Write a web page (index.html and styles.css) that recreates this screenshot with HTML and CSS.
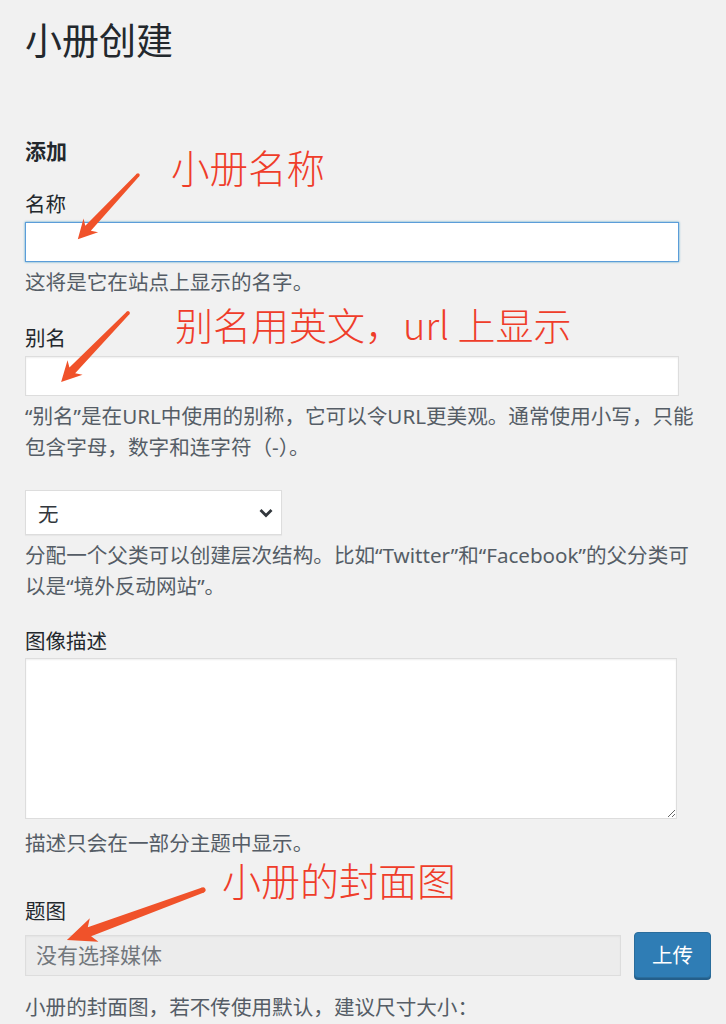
FILE: index.html
```html
<!DOCTYPE html>
<html lang="zh-CN">
<head>
<meta charset="utf-8">
<title>小册创建</title>
<link rel="stylesheet" href="styles.css">
</head>
<body>
<div class="page">
  <h1 class="title">小册创建</h1>
  <h2 class="subtitle">添加</h2>

  <div class="field field-first">
    <label class="label">名称</label>
    <input class="text-input is-focus" type="text">
    <p class="desc">这将是它在站点上显示的名字。</p>
  </div>

  <div class="field">
    <label class="label">别名</label>
    <input class="text-input" type="text">
    <p class="desc">“别名”是在URL中使用的别称，它可以令URL更美观。通常使用小写，只能包含字母，数字和连字符（-）。</p>
  </div>

  <div class="field field-select">
    <div class="select">
      <span>无</span>
      <svg class="chevron" width="14" height="10" viewBox="0 0 14 10"><path d="M1.5 2 L7 7.5 L12.5 2" fill="none" stroke="#32373c" stroke-width="2.8"/></svg>
    </div>
    <p class="desc">分配一个父类可以创建层次结构。比如“Twitter”和“Facebook”的父分类可以是“境外反动网站”。</p>
  </div>

  <div class="field field-desc">
    <label class="label">图像描述</label>
    <textarea class="textarea"></textarea>
    <p class="desc desc-after-area">描述只会在一部分主题中显示。</p>
  </div>

  <div class="field field-media">
    <label class="label">题图</label>
    <div class="media-row">
      <input class="media-input" type="text" placeholder="没有选择媒体" readonly>
      <button class="upload-btn" type="button">上传</button>
    </div>
    <p class="desc desc-media">小册的封面图，若不传使用默认，建议尺寸大小：</p>
  </div>

  <div class="notes">
    <span class="note note-1">小册名称</span>
    <span class="note note-2">别名用英文，url 上显示</span>
    <span class="note note-3">小册的封面图</span>
    <svg class="arrows" width="726" height="1024" viewBox="0 0 726 1024">
      <g fill="#f0522a">
        <g transform="translate(138,175) rotate(133.15)">
          <polygon points="0,-1.7 73,-3.8 69,-10 88,0 69,10 73,3.8 0,1.7"/>
          <circle cx="0" cy="0" r="1.7"/>
        </g>
        <g transform="translate(128,313) rotate(134.15)">
          <polygon points="0,-1.9 80,-4 76,-10.5 96,0 76,10.5 80,4 0,1.9"/>
          <circle cx="0" cy="0" r="1.9"/>
        </g>
        <g transform="translate(203,890) rotate(159.8)">
          <polygon points="0,-2.6 121,-4.8 116,-12.5 145,0 116,12.5 121,4.8 0,2.6"/>
          <circle cx="0" cy="0" r="2.6"/>
        </g>
      </g>
    </svg>
  </div>
</div>
</body>
</html>
```
FILE: styles.css
```css
* { box-sizing: border-box; }

body {
  margin: 0;
  background: #f1f1f1;
  font-family: "Noto Sans", "Noto Sans CJK SC", sans-serif;
  color: #23282d;
  overflow: hidden;
}

.page {
  position: relative;
  width: 726px;
  height: 1024px;
  padding: 18px 0 0 25px;
}

.title {
  margin: 0;
  font-size: 37px;
  font-weight: 400;
  line-height: 46px;
}

.subtitle {
  margin: 72px 0 0;
  font-size: 21px;
  font-weight: 700;
  line-height: 30px;
}

.field { margin-top: 26px; }
.field-first { margin-top: 24px; }
.field-select { margin-top: 27px; }
.field-desc { margin-top: 25px; }
.field-media { margin-top: 38px; }

.label {
  display: block;
  font-size: 20.5px;
  line-height: 28px;
  color: #23282d;
}

.text-input {
  display: block;
  width: 654px;
  height: 40px;
  margin: 4px 0 0;
  border: 1px solid #dddddd;
  background: #fff;
  box-shadow: inset 0 1px 2px rgba(0,0,0,0.07);
  outline: none;
  font: inherit;
}

.text-input.is-focus {
  border-color: #5b9dd9;
  box-shadow: 0 0 2px rgba(30,140,190,0.8);
}

.desc {
  margin: 5px 0 0;
  font-size: 20.6px;
  line-height: 31px;
  color: #555d66;
  width: 680px;
}

.select {
  display: flex;
  align-items: center;
  justify-content: space-between;
  width: 257px;
  height: 45px;
  padding: 0 8px 0 12px;
  background: #fff;
  border: 1px solid #dddddd;
  box-shadow: 0 1px 1px rgba(0,0,0,0.04);
  font-size: 20.5px;
  color: #32373c;
}

.chevron { display: block; }

.textarea {
  display: block;
  width: 652px;
  height: 161px;
  margin: 3px 0 0;
  border: 1px solid #dddddd;
  background: #fff;
  box-shadow: inset 0 1px 2px rgba(0,0,0,0.07);
  outline: none;
  font: inherit;
  resize: both;
}

.desc-after-area { margin-top: 9px; }

.media-row {
  display: flex;
  align-items: center;
  gap: 13px;
  margin-top: 7px;
  height: 46px;
}

.media-input {
  width: 596px;
  height: 41px;
  padding: 0 10px;
  border: 1px solid #dddddd;
  background: #ececec;
  box-shadow: inset 0 1px 2px rgba(0,0,0,0.04);
  outline: none;
  font-family: inherit;
  font-size: 21px;
  color: #72777c;
}

.media-input::placeholder { color: #72777c; }

.upload-btn {
  width: 77px;
  height: 46px;
  padding: 0;
  border: 1px solid #2a6d9c;
  border-radius: 4px;
  background: #2f7db5;
  box-shadow: 0 2px 0 #245f8b;
  color: #fff;
  font-family: inherit;
  font-size: 20.5px;
  line-height: 1;
}

.desc-media { margin-top: 14px; }

.notes {
  position: absolute;
  left: 0;
  top: 0;
  width: 726px;
  height: 1024px;
  pointer-events: none;
}

.arrows {
  position: absolute;
  left: 0;
  top: 0;
}

.note {
  position: absolute;
  font-family: "Noto Sans CJK SC", sans-serif;
  font-weight: 300;
  font-size: 38.5px;
  line-height: 40px;
  color: #ef3d2a;
  white-space: nowrap;
}

.note-1 { left: 171px; top: 146px; }
.note-2 { left: 175px; top: 304px; font-size: 38px; }
.note-3 { left: 222px; top: 859px; font-size: 39px; }
```
